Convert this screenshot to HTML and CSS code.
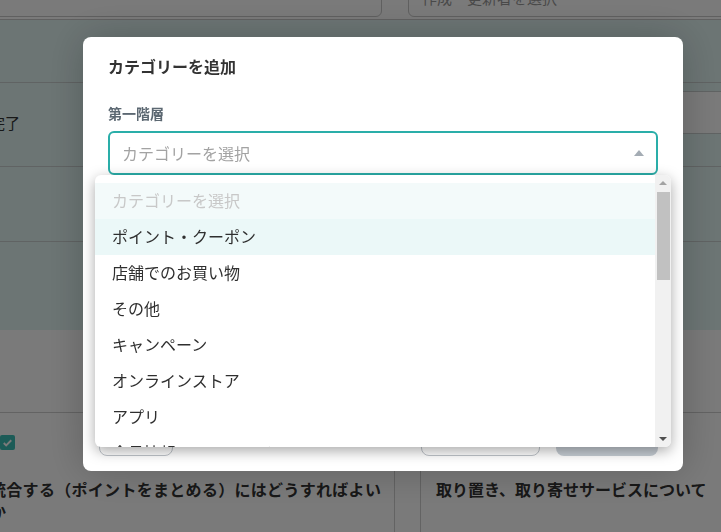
FILE: index.html
```html
<!DOCTYPE html>
<html lang="ja">
<head>
<meta charset="utf-8">
<title>カテゴリーを追加</title>
<link rel="stylesheet" href="styles.css">
</head>
<body>
<div class="page">
  <div class="filters">
    <div class="filter filter-a"><span class="filter-caret">▾</span></div>
    <div class="filter filter-b">作成・更新者を選択</div>
  </div>
  <div class="table">
    <div class="row row-1"></div>
    <div class="row row-2"><span class="status">完了</span><div class="cell-box"></div></div>
    <div class="row row-3"></div>
    <div class="row row-4"></div>
  </div>
  <div class="section"></div>
  <div class="cards">
    <div class="card card-left">
      <span class="check"><svg viewBox="0 0 16 16" width="16" height="16"><path d="M4 8.5l2.6 2.6L12 5.6" fill="none" stroke="#fff" stroke-width="2"/></svg></span>
      <p class="card-title">統合する（ポイントをまとめる）にはどうすればよいか</p>
    </div>
    <div class="card card-right">
      <span class="check"><svg viewBox="0 0 16 16" width="16" height="16"><path d="M4 8.5l2.6 2.6L12 5.6" fill="none" stroke="#fff" stroke-width="2"/></svg></span>
      <p class="card-title">取り置き、取り寄せサービスについて</p>
    </div>
  </div>
</div>
<div class="overlay"></div>
<div class="modal">
  <h2 class="modal-title">カテゴリーを追加</h2>
  <label class="field-label">第一階層</label>
  <div class="select">
    <span class="select-placeholder">カテゴリーを選択</span>
    <span class="select-caret"></span>
    <div class="dropdown">
      <ul class="options">
        <li class="option option-placeholder">カテゴリーを選択</li>
        <li class="option option-hover">ポイント・クーポン</li>
        <li class="option">店舗でのお買い物</li>
        <li class="option">その他</li>
        <li class="option">キャンペーン</li>
        <li class="option">オンラインストア</li>
        <li class="option">アプリ</li>
        <li class="option">会員情報・マイページ</li>
      </ul>
      <div class="scrollbar">
        <span class="sb-up"></span>
        <span class="sb-thumb"></span>
        <span class="sb-down"></span>
      </div>
    </div>
  </div>
  <div class="modal-footer">
    <button class="btn btn-outline btn-back">戻る</button>
    <div class="btn-group">
      <button class="btn btn-outline btn-cancel">キャンセル</button>
      <button class="btn btn-primary">追加</button>
    </div>
  </div>
</div>
</body>
</html>
```

FILE: styles.css
```css
* { box-sizing: border-box; }
html, body { margin: 0; padding: 0; }
body {
  width: 721px;
  height: 532px;
  overflow: hidden;
  background: #fff;
  font-family: "Noto Sans CJK JP", "Noto Sans", sans-serif;
  color: #333;
}
.page { width: 721px; height: 532px; overflow: hidden; }

/* filter bar */
.filters {
  height: 20px;
  display: flex;
  align-items: flex-end;
  padding-bottom: 2px;
  border-bottom: 1px solid #c9c9c9;
  margin-left: -40px;
}
.filter {
  flex: none;
  height: 40px;
  border: 1px solid #c8c8c8;
  border-radius: 6px;
  background: #fff;
  font-size: 15px;
  color: #999;
  display: flex;
  align-items: center;
}
.filter-a { width: 422px; justify-content: flex-end; padding-right: 13px; }
.filter-caret { font-size: 12px; color: #666; margin-top: -14px; }
.filter-b { width: 360px; margin-left: 26px; padding-left: 13px; }

/* table */
.table { background: #e2f5f3; }
.row { border-bottom: 1px solid #c9cfcf; display: flex; align-items: center; }
.row-1 { height: 63px; }
.row-2 { height: 84px; }
.row-3 { height: 75px; }
.row-4 { height: 88px; border-bottom: none; }
.status { margin-left: -10px; margin-top: -4px; font-size: 15px; color: #333; }
.cell-box {
  margin-left: auto;
  width: 60px;
  height: 43px;
  margin-top: -25px;
  background: #fff;
  border-top: 1px solid #c9cfcf;
  border-bottom: 1px solid #c9cfcf;
}

.section { height: 83px; border-bottom: 1px solid #cfcfcf; }

/* cards */
.cards {
  display: grid;
  grid-template-columns: 419px 320px;
  gap: 25px;
  margin-left: -24px;
}
.card {
  height: 140px;
  border: 1px solid #cfcfcf;
  border-top: none;
  padding: 22px 16px 0 17px;
}
.card-left { padding-left: 18px; padding-right: 9px; }
.card-left .check { margin-left: 5px; }
.card-left .card-title { margin-left: -5px; letter-spacing: 0.3px; }
.card-right { padding-left: 15px; }
.check {
  display: block;
  width: 15px;
  height: 15px;
  border-radius: 2px;
  background: #3cbfb6;
}
.check svg { display: block; width: 15px; height: 15px; }
.card-title {
  margin: 28px 0 0;
  font-size: 16px;
  font-weight: 700;
  line-height: 22px;
  color: #333;
}

/* overlay */
.overlay {
  position: fixed;
  inset: 0;
  background: rgba(0, 0, 0, 0.52);
}

/* modal */
.modal {
  position: fixed;
  left: 83px;
  top: 37px;
  width: 600px;
  height: 434px;
  background: #fff;
  border-radius: 8px;
  padding: 18px 25px 15px;
  display: flex;
  flex-direction: column;
  box-shadow: 0 0 40px rgba(0, 0, 0, 0.22);
}
.modal-title {
  margin: 0 0 26px;
  font-size: 16px;
  line-height: 22px;
  font-weight: 700;
  color: #333;
}
.field-label {
  display: block;
  font-size: 14px;
  line-height: 20px;
  font-weight: 700;
  color: #5c6872;
  margin-bottom: 8px;
}
.select {
  position: relative;
  height: 44px;
  border: 2px solid #2aaea9;
  border-radius: 6px;
  padding-left: 12px;
  display: flex;
  align-items: center;
}
.select-placeholder { font-size: 16px; color: #a3a3a3; flex: 1; }
.select-caret {
  width: 0;
  height: 0;
  border-left: 5px solid transparent;
  border-right: 5px solid transparent;
  border-bottom: 6px solid #a4acb4;
  margin-right: 12px;
}

/* dropdown list */
.dropdown {
  position: absolute;
  left: -15px;
  top: 42px;
  width: 576px;
  height: 272px;
  background: #fff;
  border-radius: 6px;
  overflow: hidden;
  display: flex;
  box-shadow: 0 4px 14px rgba(0, 0, 0, 0.34);
  z-index: 5;
}
.options {
  list-style: none;
  margin: 0;
  padding: 8px 0 0;
  flex: 1;
  overflow: hidden;
}
.option {
  height: 36px;
  line-height: 34px;
  padding-left: 17px;
  font-size: 16px;
  color: #2f2f2f;
  white-space: nowrap;
}
.option-placeholder { background: #f3fafa; color: #c8c8c8; }
.option-hover { background: #ebf8f8; }

.scrollbar {
  position: relative;
  width: 16px;
  flex: none;
  background: #f1f1f1;
}
.sb-up, .sb-down {
  position: absolute;
  left: 4px;
  width: 0;
  height: 0;
  border-left: 4px solid transparent;
  border-right: 4px solid transparent;
}
.sb-up { top: 6px; border-bottom: 4px solid #a3a3a3; }
.sb-down { bottom: 6px; border-top: 4px solid #505050; }
.sb-thumb {
  position: absolute;
  left: 2px;
  top: 17px;
  width: 13px;
  height: 88px;
  background: #c1c1c1;
}

/* footer */
.modal-footer {
  margin-top: auto;
  display: flex;
  justify-content: space-between;
}
.btn {
  height: 36px;
  border-radius: 8px;
  font-family: inherit;
  font-size: 14px;
  font-weight: 700;
}
.btn-outline { background: #fff; border: 1px solid #bfc4ca; color: #555; }
.btn-back { width: 74px; margin-left: -9px; }
.btn-group { display: flex; gap: 16px; }
.btn-cancel { width: 119px; }
.btn-primary { width: 102px; background: #c6cdd4; border: none; color: #fff; }
```
